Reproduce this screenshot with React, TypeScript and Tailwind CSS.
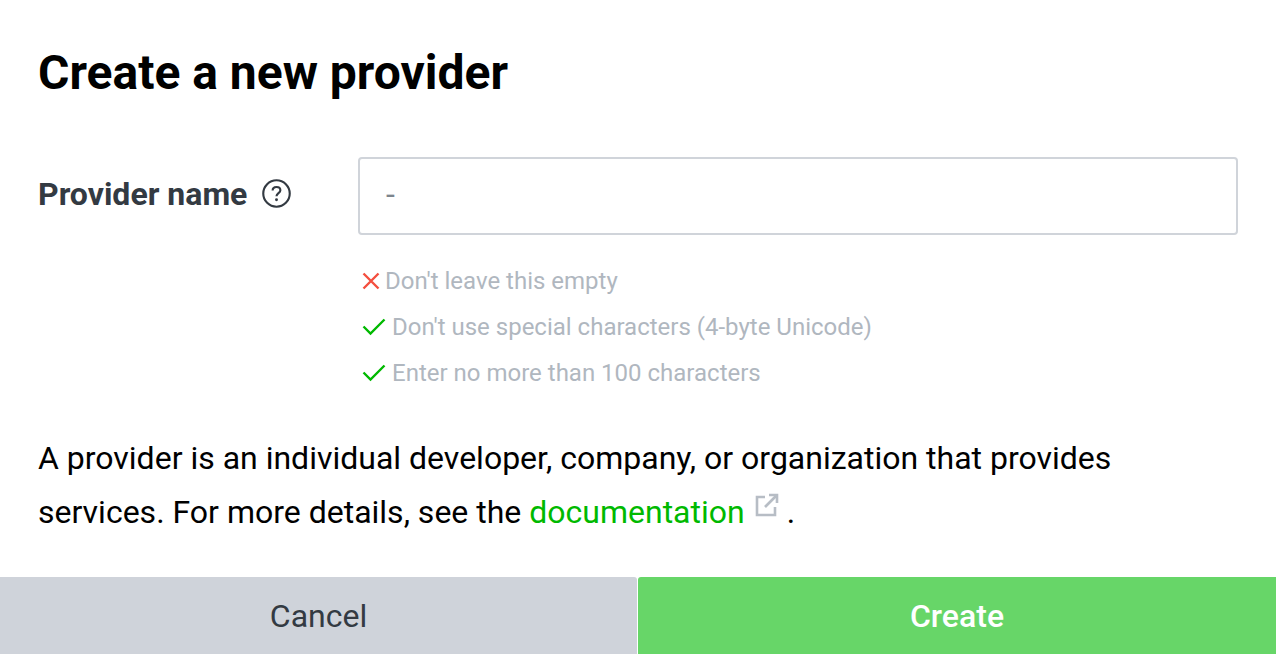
export default function App() {
  const check = (
    <svg width="24" height="18" viewBox="0 0 24 18" fill="none" stroke="#00b900" strokeWidth="2.4" className="shrink-0"><path d="M1.5 8.5 L8.5 15.5 L22.5 1.5" /></svg>
  );
  return (
    <div className="w-[1276px] h-[654px] bg-white flex flex-col font-['Roboto',sans-serif] overflow-hidden">
      <div className="flex-1 px-[38px] pt-[44px]">
        <h1 className="text-[48px] leading-[58px] font-bold text-black">Create a new provider</h1>
        <div className="flex mt-[55px]">
          <div className="w-[320px] h-[78px] pb-[4px] flex items-center gap-[15px] shrink-0">
            <span className="text-[32px] font-bold text-[#333a42]">Provider name</span>
            <svg width="29" height="29" viewBox="0 0 30 30" fill="none" className="mt-[-2px]">
              <circle cx="15" cy="15" r="13.7" stroke="#333a42" strokeWidth="2.2" />
              <path d="M11 12 C11 9.5 12.8 8.3 15 8.3 C17.3 8.3 19 9.7 19 11.7 C19 14.6 15 14.8 15 17.8" stroke="#333a42" strokeWidth="2.2" />
              <circle cx="15" cy="21.4" r="1.5" fill="#333a42" />
            </svg>
          </div>
          <div className="flex-1">
            <div className="h-[78px] border-2 border-[#d0d4da] rounded-[4px] flex items-center pl-[26px] pb-[4px] text-[32px] text-[#7d858d]">-</div>
            <div className="mt-[23px] flex flex-col text-[24px] leading-[46px] text-[#b0b7bf] pl-[4px]">
              <div className="flex items-center gap-[5px]">
                <svg width="18" height="18" viewBox="0 0 18 18" fill="none" stroke="#f44f3f" strokeWidth="2.4" className="shrink-0"><path d="M1.5 1.5 L16.5 16.5 M16.5 1.5 L1.5 16.5" /></svg>
                <span>Don't leave this empty</span>
              </div>
              <div className="flex items-center gap-[6px]">{check}<span>Don't use special characters (4-byte Unicode)</span></div>
              <div className="flex items-center gap-[6px]">{check}<span>Enter no more than 100 characters</span></div>
            </div>
          </div>
        </div>
        <p className="mt-[35px] text-[32px] leading-[54px] text-black w-[1120px]">
          A provider is an individual developer, company, or organization that provides services. For more details, see the <span className="text-[#00b900]">documentation</span>
          <svg width="24" height="24" viewBox="0 0 24 24" fill="none" stroke="#b7bdc5" strokeWidth="2.6" className="inline-block ml-[10px] mr-[8px] align-[6px]">
            <path d="M10 4 H2 V22 H20 V14" /><path d="M10 14 L22 2" /><path d="M14 2 H22 V10" />
          </svg>
          .
        </p>
      </div>
      <div className="h-[77px] flex gap-[1px] shrink-0">
        <button className="w-[637px] bg-[#cfd3da] text-[#333a42] text-[32px] rounded-tr-[3px]">Cancel</button>
        <button className="flex-1 bg-[#67d668] text-white text-[32px] font-medium rounded-tl-[3px]">Create</button>
      </div>
    </div>
  );
}
